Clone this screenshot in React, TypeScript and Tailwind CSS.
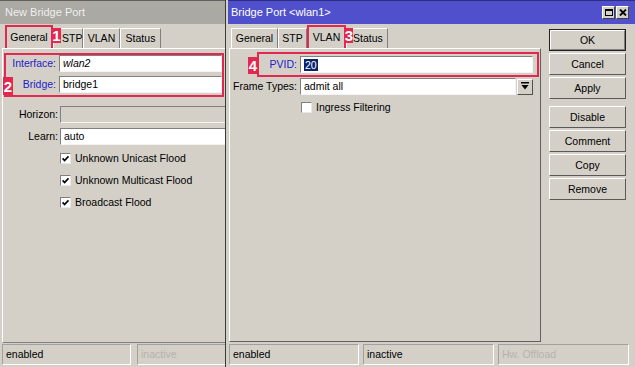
import React from 'react';

const RED = 'border-[#e3284f]';

const Badge = ({ n, className }: { n: string; className: string }) => (
    <div className={`absolute bg-[#e3284f] text-white font-bold text-[15px] leading-none flex items-center justify-center ${className}`}>{n}</div>
);

const Tab = ({ label, w, active, pad }: { label: string; w: string; active?: boolean; pad?: string }) =>
    active ? (
        <div className={`${w} h-[23px] border-2 ${RED} border-b-0 flex items-center justify-center pb-[1px]`}>{label}</div>
    ) : (
        <div className={`${w} h-[20px] border-t border-l border-white border-r border-r-[#808080] flex items-center ${pad ?? 'justify-center'}`}>{label}</div>
    );

const Field = ({ children, className }: { children?: React.ReactNode; className: string }) => (
    <div className={`h-[17px] shrink-0 border border-t-[#808080] border-l-[#808080] border-b-[#f4f4f4] border-r-[#f4f4f4] flex items-center pl-[3px] ${className}`}>{children}</div>
);

const Check = ({ checked }: { checked?: boolean }) => (
    <div className="w-[11px] h-[11px] shrink-0 bg-white border border-t-[#808080] border-l-[#808080] border-b-[#e8e8e8] border-r-[#e8e8e8] flex items-center justify-center">
        {checked && (
            <svg width="7" height="7" viewBox="0 0 7 7">
                <path d="M0.6 3.4 L2.6 5.6 L6.5 1.2" stroke="#000" strokeWidth="1.7" fill="none" />
            </svg>
        )}
    </div>
);

const Btn = ({ label, isDefault }: { label: string; isDefault?: boolean }) => (
    <div className={`h-[22px] w-[77px] flex items-center justify-center border ${isDefault ? 'border-[#202020]' : 'border-t-white border-l-white border-b-[#5a5a5a] border-r-[#5a5a5a]'}`}>
        <div className={`w-full h-full flex items-center justify-center ${isDefault ? 'border border-t-white border-l-white border-b-[#808080] border-r-[#808080]' : ''}`}>{label}</div>
    </div>
);

const StatusBox = ({ text, w, dim }: { text: string; w: string; dim?: boolean }) => (
    <div className={`${w} h-[21px] shrink-0 border border-t-[#a0a0a0] border-l-[#a0a0a0] border-b-white border-r-white flex items-center pl-[3px] ${dim ? 'text-[#b5b3ad]' : 'text-black'}`}>{text}</div>
);

const App = () => {
    return (
        <div className="w-[635px] h-[367px] flex bg-[#d4d0c8] overflow-hidden font-['Liberation_Sans',Arial,sans-serif] text-[10.5px] text-black leading-none whitespace-nowrap">
            {/* LEFT WINDOW START */}
            <div className="w-[226px] shrink-0 h-full flex flex-col border-r border-[#3a3a3a] overflow-hidden">
                <div className="h-[24px] shrink-0 bg-[#aba9a4] border-t border-[#606060] text-[#eeeeee] text-[11px] pl-[5px] flex items-center">New Bridge Port</div>

                <div className="relative h-[24px] shrink-0 flex items-end pl-[5px]">
                    <Tab label="General" w="w-[48px]" active />
                    <Tab label="STP" w="w-[30px]" pad="pl-[8px]" />
                    <Tab label="VLAN" w="w-[37px]" />
                    <Tab label="Status" w="w-[41px]" />
                    <Badge n="1" className="left-[52px] top-[4px] w-[9px] h-[15px]" />
                </div>

                <div className="h-[295px] shrink-0 ml-[2px] w-[240px] border border-t-white border-l-white border-b-[#808080] border-r-[#808080] pt-[4px]">
                    <div className={`relative ml-[1px] w-[220px] border-2 ${RED} pb-[2px] flex flex-col gap-[4px]`}>
                        <div className="flex items-center">
                            <span className="w-[50px] text-right text-[#2323c8]">Interface:</span>
                            <Field className="ml-[3px] w-[163px] bg-white italic">wlan2</Field>
                        </div>
                        <div className="flex items-center">
                            <span className="w-[50px] text-right text-[#2323c8]">Bridge:</span>
                            <Field className="ml-[3px] w-[163px] bg-white">bridge1</Field>
                        </div>
                        <Badge n="2" className="-left-[3px] top-[22px] w-[10px] h-[18px]" />
                    </div>

                    <div className="flex flex-col gap-[5px] mt-[9px]">
                        <div className="flex items-center">
                            <span className="w-[55px] text-right">Horizon:</span>
                            <Field className="ml-[2px] w-[170px] h-[15px] bg-[#d4d0c8]" />
                        </div>
                        <div className="flex items-center">
                            <span className="w-[55px] text-right">Learn:</span>
                            <Field className="ml-[2px] w-[170px] bg-white">auto</Field>
                        </div>
                    </div>

                    <div className="flex flex-col mt-[2px] pl-[57px]">
                        {['Unknown Unicast Flood', 'Unknown Multicast Flood', 'Broadcast Flood'].map((t) => (
                            <div key={t} className="h-[22px] flex items-center gap-[4px]">
                                <Check checked />
                                <span>{t}</span>
                            </div>
                        ))}
                    </div>
                </div>

                <div className="mt-[1px] flex gap-[6px] pl-[2px]">
                    <StatusBox text="enabled" w="w-[129px]" />
                    <StatusBox text="inactive" w="w-[100px]" dim />
                </div>
            </div>
            {/* LEFT WINDOW END */}

            {/* RIGHT WINDOW START */}
            <div className="flex-1 h-full flex flex-col ml-[2px]">
                <div className="h-[24px] shrink-0 bg-[#5050cc] border-t border-[#2c2c80] text-white text-[11px] pl-[3px] pr-[6px] flex items-center justify-between">
                    <span>Bridge Port &lt;wlan1&gt;</span>
                    <div className="flex gap-[1px]">
                        <div className="w-[13px] h-[13px] bg-[#d4d0c8] border border-t-white border-l-white border-b-[#404040] border-r-[#404040] flex items-center justify-center">
                            <div className="w-[8px] h-[7px] border border-black border-t-2" />
                        </div>
                        <div className="w-[13px] h-[13px] bg-[#d4d0c8] border border-t-white border-l-white border-b-[#404040] border-r-[#404040] flex items-center justify-center">
                            <svg width="8" height="7" viewBox="0 0 8 7">
                                <path d="M1 0.5 L7 6.5 M7 0.5 L1 6.5" stroke="#000" strokeWidth="1.8" />
                            </svg>
                        </div>
                    </div>
                </div>

                <div className="h-[319px] shrink-0 flex">
                    <div className="w-[313px] flex flex-col pl-[1px]">
                        <div className="relative h-[24px] shrink-0 flex items-end pl-[2px]">
                            <Tab label="General" w="w-[47px]" />
                            <Tab label="STP" w="w-[29px]" />
                            <Tab label="VLAN" w="w-[39px]" active />
                            <Tab label="Status" w="w-[42px]" pad="pl-[6px]" />
                            <Badge n="3" className="left-[116px] top-[4px] w-[8px] h-[15px]" />
                        </div>
                        <div className="h-[294px] w-[312px] border border-t-white border-l-white border-b-[#606060] border-r-[#606060] pt-[3px]">
                            <div className={`relative ml-[27px] w-[282px] h-[25px] border-2 ${RED} flex items-center`}>
                                <span className="w-[38px] text-right text-[#2323c8]">PVID:</span>
                                <Field className="ml-[3px] w-[233px] h-[16px] bg-white">
                                    <span className="bg-[#0a246a] text-white px-[1px] leading-[12px]">20</span>
                                </Field>
                                <Badge n="4" className="-left-[11px] top-[3px] w-[10px] h-[17px]" />
                            </div>
                            <div className="flex items-center mt-[1px]">
                                <span className="w-[67px] shrink-0 text-right">Frame Types:</span>
                                <Field className="ml-[3px] w-[216px] h-[16px] bg-white">admit all</Field>
                                <div className="ml-[1px] w-[16px] h-[16px] shrink-0 border border-t-white border-l-white border-b-[#505050] border-r-[#505050] flex items-center justify-center">
                                    <svg width="8" height="9" viewBox="0 0 8 9">
                                        <rect x="0" y="0" width="8" height="1.5" fill="#000" />
                                        <path d="M0.5 3 L7.5 3 L4 7.5 Z" fill="#000" />
                                    </svg>
                                </div>
                            </div>
                            <div className="flex items-center gap-[4px] ml-[71px] mt-[7px]">
                                <Check />
                                <span>Ingress Filtering</span>
                            </div>
                        </div>
                    </div>

                    <div className="ml-[8px] pt-[5px] flex flex-col">
                        <div className="flex flex-col gap-[2px]">
                            <Btn label="OK" isDefault />
                            <Btn label="Cancel" />
                            <Btn label="Apply" />
                        </div>
                        <div className="flex flex-col gap-[2px] mt-[7px]">
                            <Btn label="Disable" />
                            <Btn label="Comment" />
                            <Btn label="Copy" />
                            <Btn label="Remove" />
                        </div>
                    </div>
                </div>

                <div className="mt-[1px] flex gap-[4px] pl-[1px]">
                    <StatusBox text="enabled" w="w-[130px]" />
                    <StatusBox text="inactive" w="w-[131px]" />
                    <StatusBox text="Hw. Offload" w="w-[131px]" dim />
                </div>
            </div>
            {/* RIGHT WINDOW END */}
        </div>
    );
};

export default App;
